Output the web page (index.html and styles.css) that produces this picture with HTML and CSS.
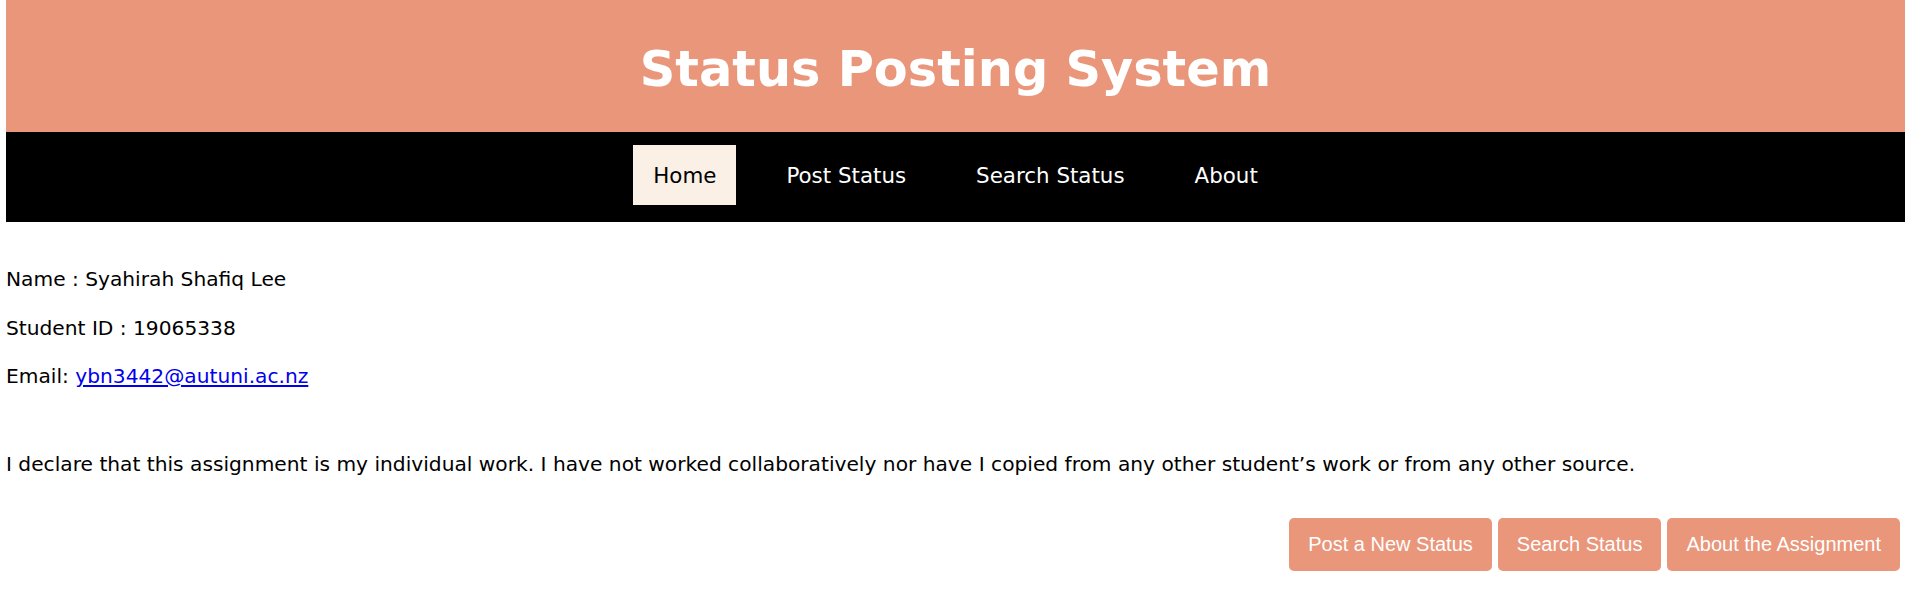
FILE: index.html
```html
<!DOCTYPE html>
<html lang="en">
<head>
<meta charset="utf-8">
<title>Status Posting System</title>
<link rel="stylesheet" href="styles.css">
</head>
<body>
<header class="site-header">
  <h1 class="site-title">Status Posting System</h1>
</header>
<nav class="site-nav">
  <a class="nav-link active" href="#">Home</a>
  <a class="nav-link" href="#">Post Status</a>
  <a class="nav-link" href="#">Search Status</a>
  <a class="nav-link" href="#">About</a>
</nav>
<main class="content">
  <p class="info">Name : Syahirah Shafiq Lee</p>
  <p class="info">Student ID : 19065338</p>
  <p class="info">Email: <a class="mail" href="#">ybn3442@autuni.ac.nz</a></p>
  <p class="declaration">I declare that this assignment is my individual work. I have not worked collaboratively nor have I copied from any other student’s work or from any other source.</p>
  <div class="actions">
    <a class="btn" href="#">Post a New Status</a>
    <a class="btn" href="#">Search Status</a>
    <a class="btn" href="#">About the Assignment</a>
  </div>
</main>
</body>
</html>
```
FILE: styles.css
```css
html, body {
  background: #ffffff;
}
body {
  margin: 0 0 0 6px;
  font-family: "DejaVu Sans", Verdana, sans-serif;
  color: #000000;
}
.site-header {
  background: #e9967a;
  height: 132px;
  display: flex;
  align-items: center;
  justify-content: center;
}
.site-title {
  margin: 0;
  color: #ffffff;
  font-family: "DejaVu Sans", Verdana, sans-serif;
  font-weight: bold;
  font-size: 49.4px;
  line-height: 60px;
  padding-top: 6px;
}
.site-nav {
  background: #000000;
  height: 90px;
  box-sizing: border-box;
  padding: 13px 0 17px;
  display: flex;
  justify-content: center;
  gap: 30px;
}
.nav-link {
  display: block;
  padding: 0 20px;
  height: 60px;
  line-height: 62px;
  font-size: 21.4px;
  color: #ffffff;
  text-decoration: none;
}
.nav-link.active {
  background: #faf0e6;
  color: #000000;
}
.content {
  padding-top: 45px;
}
.info {
  margin: 0 0 24.5px;
  font-size: 20.2px;
  line-height: 24px;
}
.info:nth-child(3) {
  margin-bottom: 64px;
}
.mail {
  color: #0000ee;
  text-decoration: underline;
}
.declaration {
  margin: 0;
  font-size: 20.2px;
  line-height: 24px;
}
.actions {
  margin-top: 42px;
  padding-right: 5px;
  display: flex;
  justify-content: flex-end;
  gap: 6px;
}
.btn {
  display: block;
  height: 53px;
  line-height: 53px;
  padding: 0 19px;
  background: #e9967a;
  color: #ffffff;
  border-radius: 5px;
  font-family: "Liberation Sans", Arial, sans-serif;
  font-size: 20px;
  text-decoration: none;
}
```
